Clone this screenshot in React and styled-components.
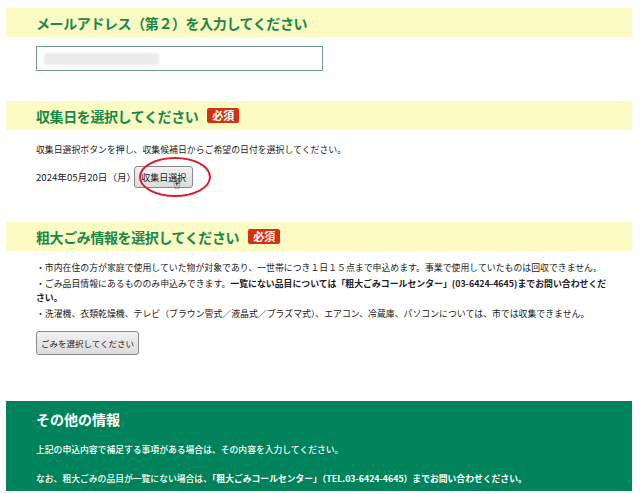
import React from "react";
import styled, { createGlobalStyle } from "styled-components";

const G = createGlobalStyle`
  body { margin: 0; background: #fff; font-family: "Noto Sans CJK JP", "Noto Sans", sans-serif; color: #222; }
`;
const Page = styled.div`padding: 8px 8px 0 6px; display: flex; flex-direction: column;`;
const Head = styled.div`
  background: #fdfbc4; height: 29px; display: flex; align-items: center; gap: 9px;
  padding-left: 30px; margin-top: ${p => p.$mt || 0}px;
`;
const HText = styled.h2`margin: 0; font-size: 14px; font-weight: 700; color: #18884a; letter-spacing: -0.4px;`;
const Badge = styled.span`background: #d5300f; color: #fff; font-size: 11px; font-weight: 700; padding: 0 5px; border-radius: 2px; line-height: 15px;`;
const Body = styled.div`padding-left: 30px; display: flex; flex-direction: column;`;
const Input = styled.div`
  margin-top: 9px; height: 25px; border: 1px solid #6f9f8e; display: flex; align-items: center; padding-left: 7px; box-sizing: border-box; width: 287px;
`;
const Blur = styled.div`width: 115px; height: 12px; background: #ececec; border-radius: 3px; filter: blur(1px);`;
const Small = styled.p`margin: ${p => p.$mt || 0}px 0 0; font-size: 8.9px; line-height: 14px; color: #222; padding-right: 24px; b { font-weight: 700; }`;
const Bullet = styled(Small)`margin-top: ${p => p.$mt || 2}px;`;
const Row = styled.div`display: flex; align-items: center; margin-top: 9px; font-size: 9.6px; position: relative;`;
const Btn = styled.button`
  font-family: inherit; font-size: ${p => p.$fs || 9}px; color: #222; background: linear-gradient(#f1f1f1, #dcdcdc);
  border: 1px solid #8a8a8a; border-radius: 3px; padding: 0 ${p => p.$px || 6}px; height: ${p => p.$h || 22}px;
`;
const Ellipse = styled.div`position: absolute; left: 103px; top: -9px; width: 68px; height: 36px; border: 2px solid #d4202a; border-radius: 50%;`;
const Cursor = styled.span`position: absolute; left: 134px; top: 6px; font-size: 13px; color: #333;`;
const Footer = styled.div`background: #00835a; color: #fff; margin-top: 46px; padding: 8px 30px 10px; height: 90px; box-sizing: border-box;`;
const FTitle = styled.h3`margin: 0; font-size: 14px; font-weight: 700;`;
const FText = styled.p`margin: ${p => p.$mt}px 0 0; font-size: 8.8px; font-weight: 500; b { font-weight: 700; }`;
const BtnWrap = styled.div`margin-top: 7px;`;

export default function App() {
  return (
    <Page>
      <G />
      <Head><HText>メールアドレス（第２）を入力してください</HText></Head>
      <Body><Input><Blur /></Input></Body>
      <Head $mt={30}><HText>収集日を選択してください</HText><Badge>必須</Badge></Head>
      <Body>
        <Small $mt={13}>収集日選択ボタンを押し、収集候補日からご希望の日付を選択してください。</Small>
        <Row>2024年05月20日（月）<Btn style={{ marginLeft: -2 }}>収集日選択</Btn><Ellipse /><Cursor>☝</Cursor></Row>
      </Body>
      <Head $mt={34}><HText>粗大ごみ情報を選択してください</HText><Badge>必須</Badge></Head>
      <Body>
        <Bullet $mt={10}>・市内在住の方が家庭で使用していた物が対象であり、一世帯につき１日１５点まで申込めます。事業で使用していたものは回収できません。</Bullet>
        <Bullet>・ごみ品目情報にあるもののみ申込みできます。<b>一覧にない品目については「粗大ごみコールセンター」(03-6424-4645)までお問い合わせください。</b></Bullet>
        <Bullet>・洗濯機、衣類乾燥機、テレビ（ブラウン管式／液晶式／プラズマ式）、エアコン、冷蔵庫、パソコンについては、市では収集できません。</Bullet>
        <BtnWrap><Btn $h={24} $fs={8.5} $px={4}>ごみを選択してください</Btn></BtnWrap>
      </Body>
      <Footer>
        <FTitle>その他の情報</FTitle>
        <FText $mt={14}>上記の申込内容で補足する事項がある場合は、その内容を入力してください。</FText>
        <FText $mt={16}>なお、粗大ごみの品目が一覧にない場合は、<b>「粗大ごみコールセンター」（TEL.03-6424-4645）までお問い合わせください。</b></FText>
      </Footer>
    </Page>
  );
}
